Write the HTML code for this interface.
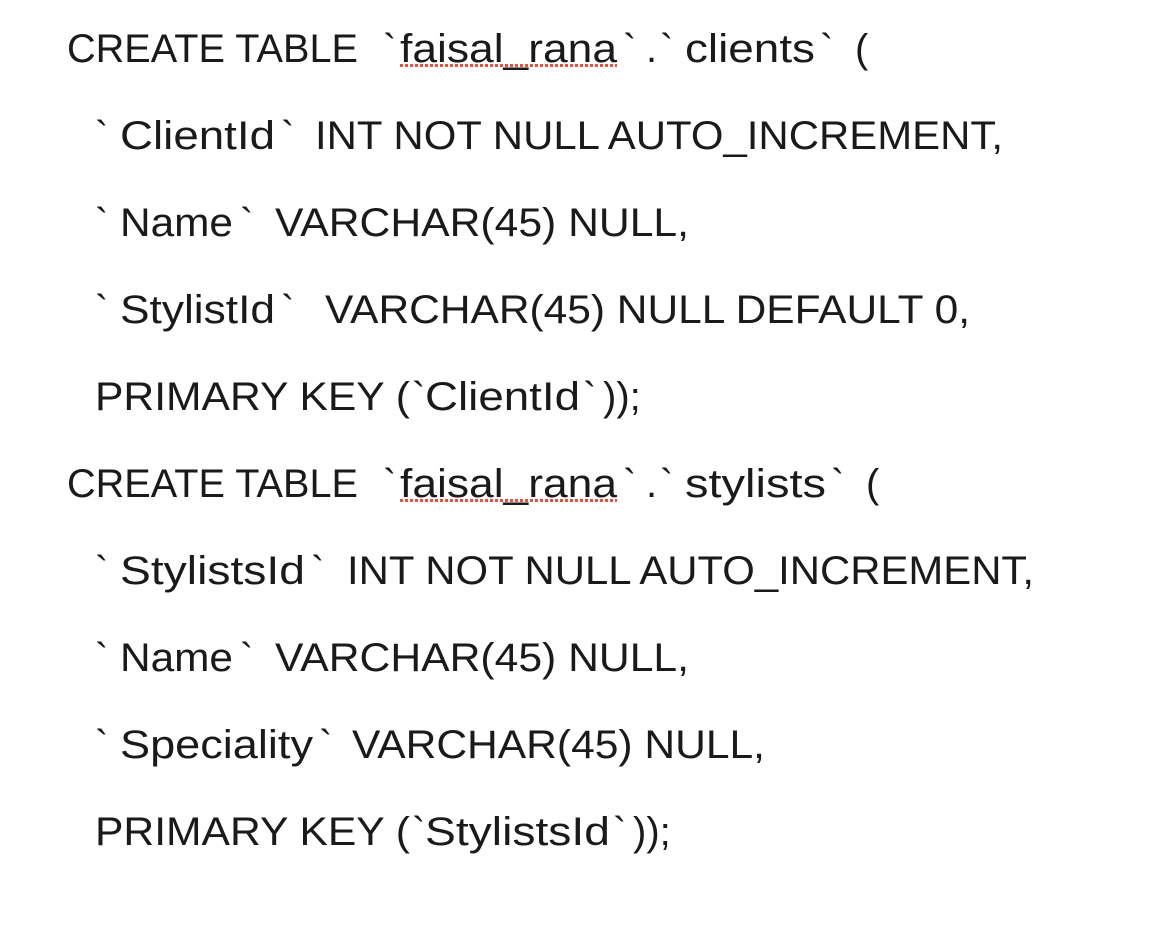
<!DOCTYPE html>
<html><head><meta charset="utf-8"><style>
html,body{margin:0;padding:0;background:#fff;}
svg{display:block}
text{font-family:"Liberation Sans",sans-serif;font-size:40px;fill:#1a1a1a}
</style></head><body>
<svg width="1156" height="928" xmlns="http://www.w3.org/2000/svg">
<g>
<text x="67" y="62" textLength="291" lengthAdjust="spacingAndGlyphs">CREATE TABLE</text>
<text x="383" y="62">`</text>
<text x="400" y="62" textLength="217" lengthAdjust="spacingAndGlyphs">faisal_rana</text>
<text x="623" y="62">`</text>
<text x="646" y="62">.</text>
<text x="660" y="62">`</text>
<text x="685" y="62" textLength="130" lengthAdjust="spacingAndGlyphs">clients</text>
<text x="820" y="62">`</text>
<text x="855" y="62">(</text>
</g>
<line x1="400" y1="65.5" x2="617" y2="65.5" stroke="#e8503f" stroke-width="3" stroke-dasharray="3,2"/>

<text x="95" y="149">`</text>
<text x="120" y="149" textLength="155" lengthAdjust="spacingAndGlyphs">ClientId</text>
<text x="281" y="149">`</text>
<text x="315" y="149" textLength="688" lengthAdjust="spacingAndGlyphs">INT NOT NULL AUTO_INCREMENT,</text>

<text x="95" y="236">`</text>
<text x="120" y="236" textLength="113" lengthAdjust="spacingAndGlyphs">Name</text>
<text x="240" y="236">`</text>
<text x="275" y="236" textLength="414" lengthAdjust="spacingAndGlyphs">VARCHAR(45) NULL,</text>

<text x="95" y="323">`</text>
<text x="120" y="323" textLength="155" lengthAdjust="spacingAndGlyphs">StylistId</text>
<text x="281" y="323">`</text>
<text x="325" y="323" textLength="645" lengthAdjust="spacingAndGlyphs">VARCHAR(45) NULL DEFAULT 0,</text>

<text x="95" y="410" textLength="315" lengthAdjust="spacingAndGlyphs">PRIMARY KEY (</text>
<text x="412" y="410">`</text>
<text x="425" y="410" textLength="155" lengthAdjust="spacingAndGlyphs">ClientId</text>
<text x="583" y="410">`</text>
<text x="603" y="410">));</text>

<g>
<text x="67" y="497" textLength="291" lengthAdjust="spacingAndGlyphs">CREATE TABLE</text>
<text x="383" y="497">`</text>
<text x="400" y="497" textLength="217" lengthAdjust="spacingAndGlyphs">faisal_rana</text>
<text x="623" y="497">`</text>
<text x="646" y="497">.</text>
<text x="660" y="497">`</text>
<text x="685" y="497" textLength="141" lengthAdjust="spacingAndGlyphs">stylists</text>
<text x="831" y="497">`</text>
<text x="866" y="497">(</text>
</g>
<line x1="400" y1="500.5" x2="617" y2="500.5" stroke="#e8503f" stroke-width="3" stroke-dasharray="3,2"/>

<text x="95" y="584">`</text>
<text x="120" y="584" textLength="185" lengthAdjust="spacingAndGlyphs">StylistsId</text>
<text x="311" y="584">`</text>
<text x="347" y="584" textLength="687" lengthAdjust="spacingAndGlyphs">INT NOT NULL AUTO_INCREMENT,</text>

<text x="95" y="671">`</text>
<text x="120" y="671" textLength="113" lengthAdjust="spacingAndGlyphs">Name</text>
<text x="240" y="671">`</text>
<text x="275" y="671" textLength="414" lengthAdjust="spacingAndGlyphs">VARCHAR(45) NULL,</text>

<text x="95" y="758">`</text>
<text x="120" y="758" textLength="193" lengthAdjust="spacingAndGlyphs">Speciality</text>
<text x="319" y="758">`</text>
<text x="352" y="758" textLength="413" lengthAdjust="spacingAndGlyphs">VARCHAR(45) NULL,</text>

<text x="95" y="845" textLength="315" lengthAdjust="spacingAndGlyphs">PRIMARY KEY (</text>
<text x="412" y="845">`</text>
<text x="425" y="845" textLength="185" lengthAdjust="spacingAndGlyphs">StylistsId</text>
<text x="613" y="845">`</text>
<text x="633" y="845">));</text>
</svg>
</body></html>
